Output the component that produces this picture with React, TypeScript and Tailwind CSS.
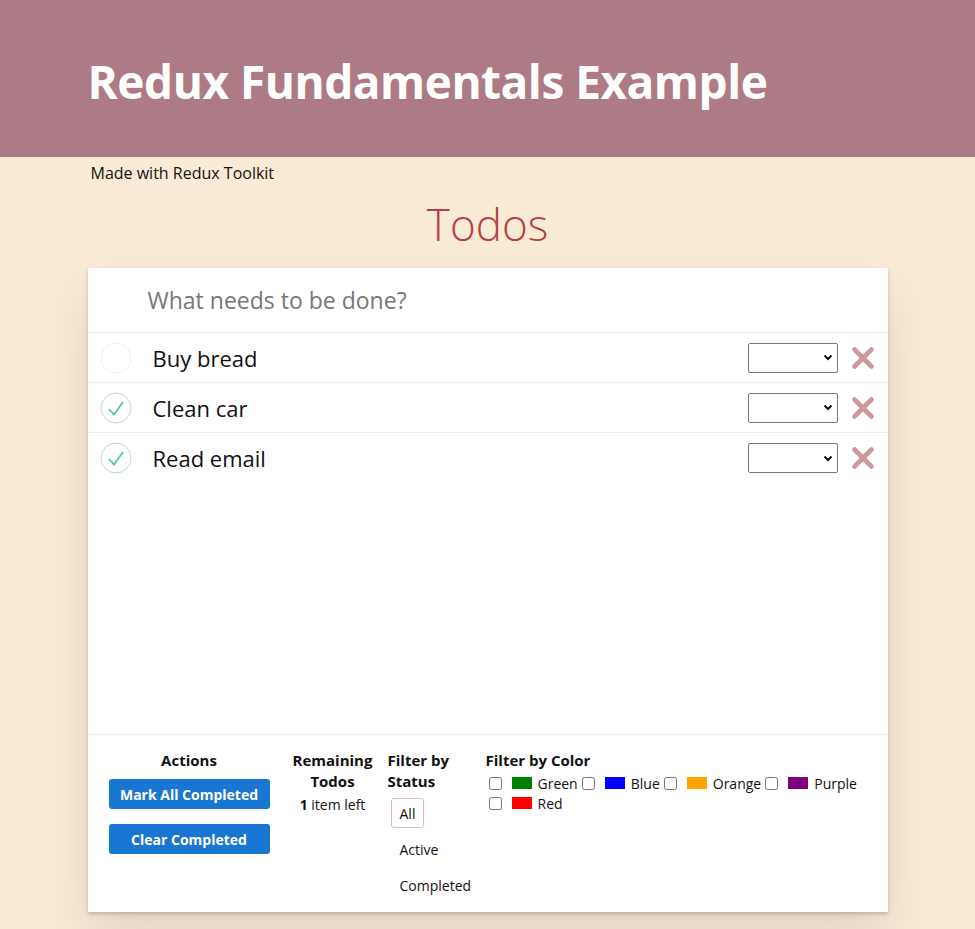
import { useState } from 'react';

type Todo = { id: number; text: string; completed: boolean };

const todos: Todo[] = [
    { id: 1, text: 'Buy bread', completed: false },
    { id: 2, text: 'Clean car', completed: true },
    { id: 3, text: 'Read email', completed: true },
];

const colors = [
    { name: 'Green', swatch: 'bg-[#008000]' },
    { name: 'Blue', swatch: 'bg-[#0000ff]' },
    { name: 'Orange', swatch: 'bg-[#ffa500]' },
    { name: 'Purple', swatch: 'bg-[#800080]' },
    { name: 'Red', swatch: 'bg-[#ff0000]' },
];

function CheckCircle({ done }: { done: boolean }) {
    return (
        <svg width="32" height="32" viewBox="0 0 32 32" className="shrink-0">
            <circle cx="16" cy="16" r="15" fill="none" stroke={done ? '#bddad5' : '#ededed'} strokeWidth="1" />
            {done && <path d="M9 17 L14 22.5 L23 10" fill="none" stroke="#5dc2af" strokeWidth="1.8" />}
        </svg>
    );
}

export default function App() {
    const [status, setStatus] = useState('All');

    return (
        <div className="min-h-screen bg-[#faebd7] text-[#111] font-['Open_Sans','Noto_Sans',sans-serif]">
            {/* Header */}
            <div className="bg-[#ad7b85] h-[157px]">
                <div className="w-[800px] mx-auto pt-[51px]">
                    <h1 className="text-white font-bold text-[46px] leading-[60px] tracking-[-0.5px]">Redux Fundamentals Example</h1>
                </div>
            </div>

            <div className="w-[800px] mx-auto">
                <p className="text-[16px] leading-[30px] pl-[3px] pt-[1px]">Made with Redux Toolkit</p>
                <h2 className="text-center text-[#b83f45] font-light text-[44px] leading-[70px] mt-[1px] mb-[9px]">Todos</h2>

                {/* Card */}
                <section className="bg-white shadow-[0_2px_4px_rgba(0,0,0,0.2),0_25px_50px_rgba(0,0,0,0.1)]">
                    <header className="h-[65px] flex items-center pl-[60px] border-b border-[#ededed]">
                        <input
                            className="w-full text-[23px] outline-none placeholder:text-[#777] bg-transparent"
                            placeholder="What needs to be done?"
                        />
                    </header>

                    <ul className="h-[401px]">
                        {todos.map((todo) => (
                            <li key={todo.id} className="h-[50px] flex items-center border-b last:border-b-0 border-[#ededed] pl-[12px] pr-[13px]">
                                <CheckCircle done={todo.completed} />
                                <span className="flex-1 text-[22px] pl-[21px] pt-[1px]">{todo.text}</span>
                                <div className="w-[90px] h-[30px] border border-[#767676] rounded-[2px] flex items-center justify-end pr-[4px] mr-[13px]">
                                    <svg width="10" height="7" viewBox="0 0 10 7"><path d="M1.5 1.5 L5 5 L8.5 1.5" fill="none" stroke="#111" strokeWidth="2" /></svg>
                                </div>
                                <svg width="24" height="24" viewBox="0 0 24 24">
                                    <path d="M3.5 3.5 L20.5 20.5 M20.5 3.5 L3.5 20.5" stroke="#cc9a9a" strokeWidth="4.6" strokeLinecap="round" />
                                </svg>
                            </li>
                        ))}
                    </ul>

                    {/* Footer */}
                    <footer className="border-t border-[#ededed] h-[178px] flex items-start pl-[21px] pt-[15px] text-[14px] leading-[21px]">
                        <div className="w-[161px] flex flex-col items-center">
                            <h5 className="font-bold text-[15px] leading-[21px]">Actions</h5>
                            <button className="mt-[8px] w-[161px] h-[30px] rounded-[3px] bg-[#1976d2] text-white font-bold text-[14px]">Mark All Completed</button>
                            <button className="mt-[15px] w-[161px] h-[30px] rounded-[3px] bg-[#1976d2] text-white font-bold text-[14px]">Clear Completed</button>
                        </div>

                        <div className="ml-[22px] w-[82px] flex flex-col items-center">
                            <h5 className="font-bold text-[15px] leading-[21px] text-center">Remaining Todos</h5>
                            <div className="mt-[2px]"><strong>1</strong> item left</div>
                        </div>

                        <div className="ml-[14px] w-[86px]">
                            <h5 className="font-bold text-[15px] leading-[21px]">Filter by Status</h5>
                            <ul className="mt-[3px]">
                                {['All', 'Active', 'Completed'].map((s) => (
                                    <li key={s} className="h-[36px] flex items-center">
                                        <button
                                            onClick={() => setStatus(s)}
                                            className={`ml-[3px] h-[30px] px-[8px] rounded-[3px] border ${status === s ? 'border-[#e0b9bc]' : 'border-transparent'}`}
                                        >
                                            {s}
                                        </button>
                                    </li>
                                ))}
                            </ul>
                        </div>

                        <div className="ml-[12px] w-[380px]">
                            <h5 className="font-bold text-[15px] leading-[21px]">Filter by Color</h5>
                            <div className="flex flex-wrap pl-[3px] pt-[2px]">
                                {colors.map((c) => (
                                    <label key={c.name} className="flex items-center h-[20px]">
                                        <input type="checkbox" className="w-[13px] h-[13px] m-0 mr-[10px]" />
                                        <span className={`w-[20px] h-[12px] ${c.swatch} mr-[6px]`} />
                                        <span className="mr-[4px]">{c.name}</span>
                                    </label>
                                ))}
                            </div>
                        </div>
                    </footer>
                </section>
            </div>
        </div>
    );
}
